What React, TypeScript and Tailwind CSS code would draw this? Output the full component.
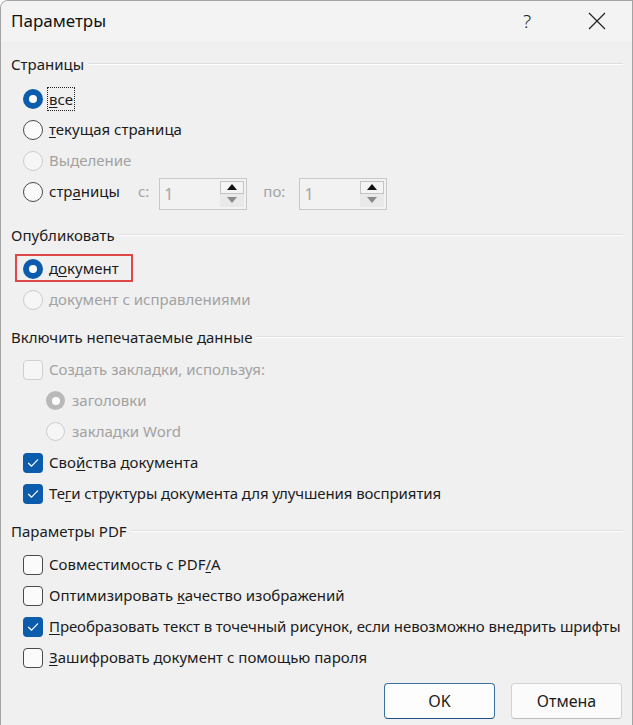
import React from 'react';

const font = { fontFamily: '"Noto Sans", "Open Sans", sans-serif' };

function Radio({ checked = false, disabled = false, small = false }: { checked?: boolean; disabled?: boolean; small?: boolean }) {
  const size = small ? 'w-[19px] h-[19px]' : 'w-[20px] h-[20px]';
  if (checked) {
    return (
      <span className={`${size} shrink-0 rounded-full flex items-center justify-center ${disabled ? 'bg-[#b9b9b9]' : 'bg-[#0b5cad]'}`}>
        <span className="w-[8px] h-[8px] rounded-full bg-white" />
      </span>
    );
  }
  return (
    <span
      className={`${size} shrink-0 rounded-full border ${disabled ? 'border-[#cccccc] bg-[#f6f6f6]' : 'border-[#4a4a4a] bg-[#fbfbfb]'}`}
    />
  );
}

function Check({ checked = false, disabled = false }: { checked?: boolean; disabled?: boolean }) {
  if (checked) {
    return (
      <span className="w-[20px] h-[20px] shrink-0 rounded-[4px] bg-[#0b5cad] flex items-center justify-center">
        <svg width="12" height="10" viewBox="0 0 12 10" fill="none">
          <path d="M1.5 5.2 L4.6 8.2 L10.6 1.8" stroke="white" strokeWidth="1.2" strokeLinecap="round" strokeLinejoin="round" />
        </svg>
      </span>
    );
  }
  return (
    <span
      className={`w-[20px] h-[20px] shrink-0 rounded-[4px] border ${disabled ? 'border-[#cfcfcf] bg-[#f6f6f6]' : 'border-[#4a4a4a] bg-[#fbfbfb]'}`}
    />
  );
}

function Header({ title, className = '' }: { title: string; className?: string }) {
  return (
    <div className={`h-[30px] flex items-center gap-[4px] pl-[10px] pr-[9px] ${className}`}>
      <span className="text-[15px] text-[#1b1b1b] whitespace-nowrap">{title}</span>
      <div className="flex-1 border-t border-[#dedede] border-b border-b-white" />
    </div>
  );
}

function Row({ children, className = '' }: { children: React.ReactNode; className?: string }) {
  return <div className={`relative h-[31px] flex items-center ${className}`}>{children}</div>;
}

function Spin() {
  return (
    <div className="w-[88px] h-[32px] mt-[4px] border border-[#c8c8c8] bg-[#f2f2f2] flex items-center justify-between pl-[4px] pr-[2px]">
      <span className="text-[16px] text-[#a5a5a5]">1</span>
      <div className="w-[24px] h-[26px] flex flex-col">
        <div className="h-[13px] border border-[#c4c4c4] bg-[#f4f4f4] flex items-center justify-center">
          <span className="w-0 h-0 border-l-[5px] border-r-[5px] border-b-[6px] border-l-transparent border-r-transparent border-b-[#111111]" />
        </div>
        <div className="h-[13px] bg-[#e9e9e9] flex items-center justify-center">
          <span className="w-0 h-0 border-l-[5px] border-r-[5px] border-t-[6px] border-l-transparent border-r-transparent border-t-[#8a8a8a]" />
        </div>
      </div>
    </div>
  );
}

export default function App() {
  const txt = 'text-[15px] text-[#1b1b1b] whitespace-nowrap';
  const dis = 'text-[15px] text-[#a2a2a2] whitespace-nowrap';

  return (
    <div style={font} className="w-[633px] h-[725px] bg-[#f0f0f0] border-t border-l border-r border-[#a3a3a3] rounded-tl-[8px] overflow-hidden">
      {/* title bar */}
      <div className="h-[40px] flex items-center pl-[10px] bg-[#f3f3f3]">
        <span className="text-[17px] text-[#111111]">Параметры</span>
        <span className="ml-auto text-[19px] font-light text-[#222222] mr-[57px]">?</span>
        <svg width="18" height="18" viewBox="0 0 18 18" className="mr-[26px]">
          <path d="M1 1 L17 17 M17 1 L1 17" stroke="#222222" strokeWidth="1.2" />
        </svg>
      </div>

      <Header title="Страницы" className="mt-[8px]" />
      <div className="mt-[4px] pl-[22px]">
        <Row className="gap-[6px]">
          <Radio checked />
          <span className={`${txt} border border-dotted border-[#222222] px-[1px] leading-[22px] -ml-[2px]`}>
            <u className="underline-offset-2">в</u>се
          </span>
        </Row>
        <Row className="gap-[6px]">
          <Radio />
          <span className={txt}>
            <u className="underline-offset-2">т</u>екущая страница
          </span>
        </Row>
        <Row className="gap-[6px]">
          <Radio disabled />
          <span className={dis}>Выделение</span>
        </Row>
        <Row className="gap-[6px]">
          <Radio />
          <span className={txt}>
            стр<u className="underline-offset-2">а</u>ницы
          </span>
          <span className={`${dis} ml-[12px]`}>с:</span>
          <span className="ml-[4px]">
            <Spin />
          </span>
          <span className={`${dis} ml-[10px]`}>по:</span>
          <span className="ml-[8px]">
            <Spin />
          </span>
        </Row>
      </div>

      <Header title="Опубликовать" className="mt-[13px]" />
      <div className="mt-[3px] pl-[22px]">
        <Row className="gap-[6px]">
          <div className="absolute left-[-8px] top-[1px] w-[118px] h-[28px] border-2 border-[#e0474a]" />
          <Radio checked />
          <span className={txt}>
            д<u className="underline-offset-2">о</u>кумент
          </span>
        </Row>
        <Row className="gap-[6px]">
          <Radio disabled />
          <span className={dis}>документ с исправлениями</span>
        </Row>
      </div>

      <Header title="Включить непечатаемые данные" className="mt-[7px]" />
      <div className="mt-[2px] pl-[22px]">
        <Row className="gap-[6px]">
          <Check disabled />
          <span className={dis}>Создать закладки, используя:</span>
        </Row>
        <Row className="gap-[7px] pl-[23px]">
          <Radio checked disabled small />
          <span className={dis}>заголовки</span>
        </Row>
        <Row className="gap-[7px] pl-[23px]">
          <Radio disabled small />
          <span className={dis}>закладки Word</span>
        </Row>
        <Row className="gap-[6px]">
          <Check checked />
          <span className={txt}>
            Сво<u className="underline-offset-2">й</u>ства документа
          </span>
        </Row>
        <Row className="gap-[6px]">
          <Check checked />
          <span className={`${txt} tracking-[-0.1px]`}>
            Те<u className="underline-offset-2">г</u>и структуры документа для улучшения восприятия
          </span>
        </Row>
      </div>

      <Header title="Параметры PDF" className="mt-[7px]" />
      <div className="mt-[3px] pl-[22px]">
        <Row className="gap-[6px]">
          <Check />
          <span className={txt}>
            Совместимость с PDF<u className="underline-offset-2">/</u>A
          </span>
        </Row>
        <Row className="gap-[6px]">
          <Check />
          <span className={txt}>
            Оптимизировать <u className="underline-offset-2">к</u>ачество изображений
          </span>
        </Row>
        <Row className="gap-[6px]">
          <Check checked />
          <span className={`${txt} tracking-[-0.1px]`}>
            <u className="underline-offset-2">П</u>реобразовать текст в точечный рисунок, если невозможно внедрить шрифты
          </span>
        </Row>
        <Row className="gap-[6px]">
          <Check />
          <span className={txt}>
            <u className="underline-offset-2">З</u>ашифровать документ с помощью пароля
          </span>
        </Row>
      </div>

      <div className="mt-[10px] flex justify-end gap-[16px] pr-[10px]">
        <button className="w-[111px] h-[36px] rounded-[4px] bg-[#fdfdfd] border border-[#3e6fa3] border-b-[#1d4f86] text-[16px] text-[#1b1b1b]">
          OK
        </button>
        <button className="w-[111px] h-[36px] rounded-[4px] bg-[#fbfbfb] border border-[#d3d3d3] border-b-[#bdbdbd] text-[16px] text-[#1b1b1b]">
          Отмена
        </button>
      </div>
    </div>
  );
}
